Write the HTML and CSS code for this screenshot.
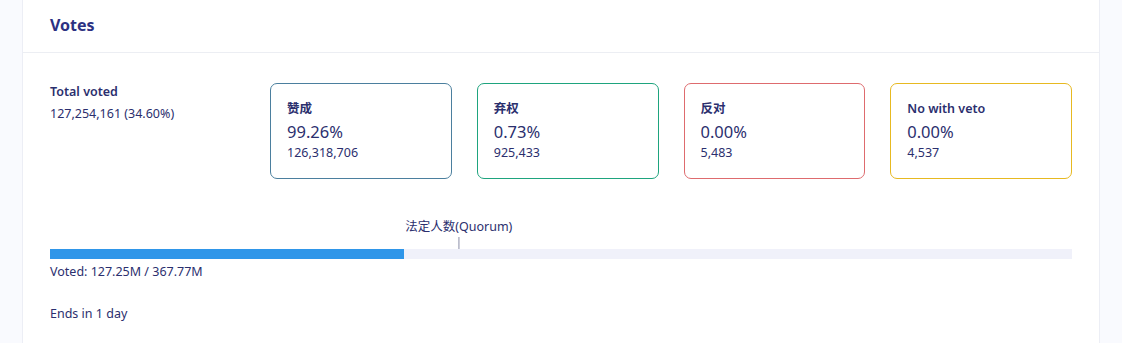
FILE: index.html
```html
<!DOCTYPE html>
<html lang="zh">
<head>
    <meta charset="UTF-8">
    <meta name="viewport" content="width=device-width, initial-scale=1.0">
    <title>Votes</title>
    <link rel="stylesheet" href="styles.css">
</head>
<body>
    <div class="card">
        <div class="card-header">
            <h2>Votes</h2>
        </div>
        <div class="card-body">
            <div class="summary">
                <div class="total">
                    <div class="total-label">Total voted</div>
                    <div class="total-value">127,254,161 (34.60%)</div>
                </div>
                <div class="options">
                    <div class="option yes">
                        <div class="option-label">赞成</div>
                        <div class="option-pct">99.26%</div>
                        <div class="option-count">126,318,706</div>
                    </div>
                    <div class="option abstain">
                        <div class="option-label">弃权</div>
                        <div class="option-pct">0.73%</div>
                        <div class="option-count">925,433</div>
                    </div>
                    <div class="option no">
                        <div class="option-label">反对</div>
                        <div class="option-pct">0.00%</div>
                        <div class="option-count">5,483</div>
                    </div>
                    <div class="option veto">
                        <div class="option-label">No with veto</div>
                        <div class="option-pct">0.00%</div>
                        <div class="option-count">4,537</div>
                    </div>
                </div>
            </div>
            <div class="progress-wrap">
                <div class="quorum" style="left: 40%;">
                    <span class="quorum-label">法定人数(Quorum)</span>
                    <span class="quorum-tick"></span>
                </div>
                <div class="progress">
                    <div class="progress-fill" style="width: 34.6%;"></div>
                </div>
            </div>
            <div class="voted">Voted: 127.25M / 367.77M</div>
            <div class="ends">Ends in 1 day</div>
        </div>
    </div>
</body>
</html>
```

FILE: styles.css
```css
body {
    font-family: "Noto Sans", "Noto Sans CJK SC", sans-serif;
    background: #f9fafe;
    margin: 0;
    padding: 0 22px;
    color: #2b2f6e;
    height: 343px;
    overflow: hidden;
}
.card {
    background: #fff;
    border-left: 1px solid #eceef5;
    border-right: 1px solid #eceef5;
    height: 343px;
    box-sizing: border-box;
}
.card-header {
    height: 53px;
    box-sizing: border-box;
    padding: 0 27px 3px 27px;
    display: flex;
    align-items: center;
    border-bottom: 1px solid #eceef3;
}
.card-header h2 {
    margin: 0;
    font-size: 16px;
    font-weight: 700;
    color: #2c3182;
}
.card-body {
    padding: 29px 27px 0 27px;
}
.summary {
    display: flex;
}
.total {
    width: 220px;
    flex-shrink: 0;
    padding-top: 2px;
}
.total-label {
    font-size: 12.5px;
    font-weight: 600;
    line-height: 16px;
}
.total-value {
    font-size: 12.5px;
    line-height: 16px;
    margin-top: 6px;
}
.options {
    flex: 1;
    display: grid;
    grid-template-columns: repeat(4, 1fr);
    gap: 25px;
    margin-top: 1px;
}
.option {
    height: 96px;
    box-sizing: border-box;
    border: 1px solid #4b7f9e;
    border-radius: 7px;
    padding: 17px 16px 0 16px;
}
.option.abstain { border-color: #1ea47e; }
.option.no { border-color: #de6b6e; }
.option.veto { border-color: #e7b921; }
.option-label {
    font-size: 12.5px;
    font-weight: 600;
    line-height: 16px;
}
.option-pct {
    font-size: 16.5px;
    line-height: 20px;
    margin-top: 5px;
}
.option-count {
    font-size: 12.5px;
    line-height: 16px;
    margin-top: 3px;
}
.progress-wrap {
    position: relative;
    margin-top: 70px;
}
.quorum {
    position: absolute;
    bottom: 100%;
    transform: translateX(-50%);
    display: flex;
    flex-direction: column;
    align-items: center;
}
.quorum-label {
    font-size: 12.5px;
    line-height: 16px;
    white-space: nowrap;
}
.quorum-tick {
    width: 1px;
    height: 12px;
    background: #8b8ea8;
    margin-top: 2px;
}
.progress {
    height: 10px;
    background: #f0f1fa;
}
.progress-fill {
    height: 100%;
    background: #2f96e9;
}
.voted {
    font-size: 12.5px;
    line-height: 16px;
    margin-top: 5px;
}
.ends {
    font-size: 12.5px;
    line-height: 16px;
    margin-top: 26px;
}
```
